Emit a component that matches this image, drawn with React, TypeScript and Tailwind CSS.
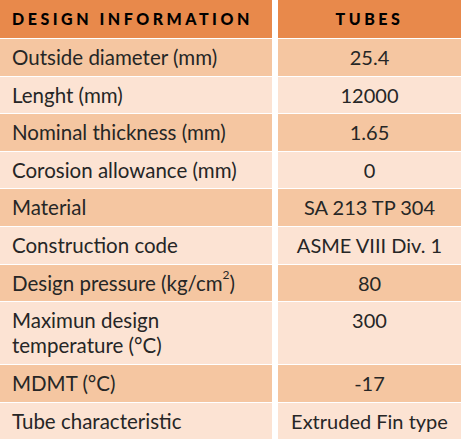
import React from 'react';

type Row = { label: React.ReactNode; value: string; tall?: boolean };

const rows: Row[] = [
  { label: 'Outside diameter (mm)', value: '25.4' },
  { label: 'Lenght (mm)', value: '12000' },
  { label: 'Nominal thickness (mm)', value: '1.65' },
  { label: 'Corosion allowance (mm)', value: '0' },
  { label: 'Material', value: 'SA 213 TP 304' },
  { label: 'Construction code', value: 'ASME VIII Div. 1' },
  {
    label: (
      <>
        Design pressure (kg/cm<sup className="text-[12px] align-top relative top-[4px]">2</sup>)
      </>
    ),
    value: '80',
  },
  {
    label: (
      <>
        Maximun design
        <br />
        temperature (°C)
      </>
    ),
    value: '300',
    tall: true,
  },
  { label: 'MDMT (°C)', value: '-17' },
  { label: 'Tube characteristic', value: 'Extruded Fin type' },
];

export default function App() {
  return (
    <div
      className="w-[461px] h-[440px] bg-white overflow-hidden text-[#262626]"
      style={{ fontFamily: 'Lato, "Open Sans", sans-serif' }}
    >
      {/* header */}
      <div className="flex gap-[6px] h-[38px] mb-px">
        <div className="w-[272px] bg-[#e8894b] flex items-center pl-3 text-[16px] font-black tracking-[0.22em] text-black whitespace-nowrap">
          DESIGN INFORMATION
        </div>
        <div className="flex-1 bg-[#e8894b] flex items-center justify-center text-[16px] font-black tracking-[0.22em] text-black">
          TUBES
        </div>
      </div>

      {rows.map((r, i) => {
        const bg = i % 2 === 0 ? 'bg-[#f5c6a1]' : 'bg-[#fce3d3]';
        return (
          <div key={i} className={`flex gap-[6px] mb-px ${r.tall ? 'h-[62px]' : 'h-[36.6px]'}`}>
            <div className={`w-[272px] ${bg} pl-3 pr-2 pt-[6px] text-[20.5px] leading-[25px] whitespace-nowrap`}>
              {r.label}
            </div>
            <div className={`flex-1 ${bg} pt-[6px] text-center text-[20px] leading-[25px] whitespace-nowrap`}>
              {r.value}
            </div>
          </div>
        );
      })}
    </div>
  );
}
